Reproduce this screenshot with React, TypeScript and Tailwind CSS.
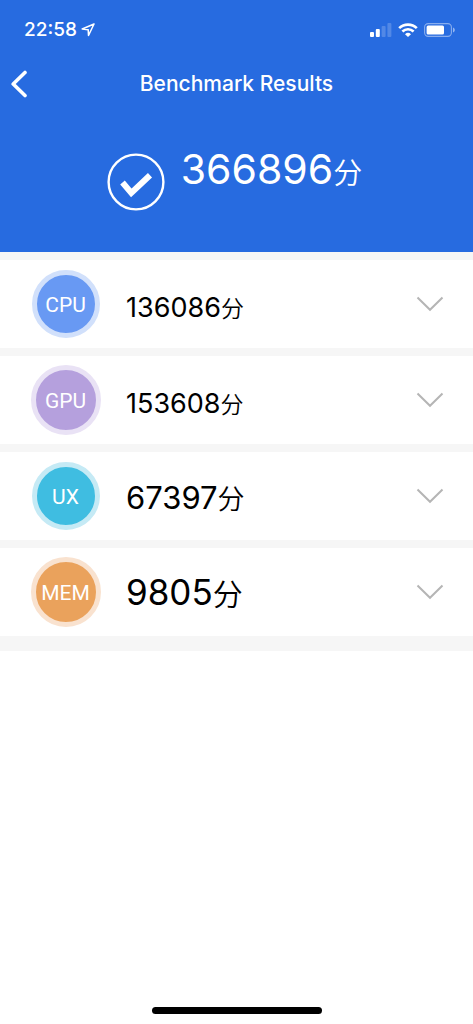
import clsx from "clsx";

interface Score {
    label: string;
    value: string;
    badge: string;
    text: string;
    unit: string;
}

const scores: Score[] = [
    { label: "CPU", value: "136086", badge: "size-[68px] bg-[#6899f3] border-[#d1e0fb]", text: "text-[27px] pt-[6px]", unit: "text-[23px]" },
    { label: "GPU", value: "153608", badge: "size-[70px] bg-[#b5a0dd] border-[#e9e2f5]", text: "text-[27px] pt-[6px]", unit: "text-[23px]" },
    { label: "UX", value: "67397", badge: "size-[68px] bg-[#3fbde1] border-[#c5eaf5]", text: "text-[31px] pt-1", unit: "text-[27px]" },
    { label: "MEM", value: "9805", badge: "size-[70px] bg-[#eaa25c] border-[#f9e2cf]", text: "text-[35px]", unit: "text-[30px]" },
];

const StatusBar = () => {
    return (
        <div className="flex items-center justify-between pt-4 pl-6 pr-[18px]">
            <div className="flex items-center gap-1">
                <span className="text-[19px] font-medium leading-7">22:58</span>
                <svg width="14" height="14" viewBox="0 0 14 14" fill="none" stroke="currentColor" strokeWidth="1.5" strokeLinejoin="round">
                    <path d="M13 1 1.2 6l6 .8.3 5.700z" />
                </svg>
            </div>
            <div className="flex items-center gap-[6px]">
                <svg width="22" height="14" viewBox="0 0 22 14" fill="currentColor">
                    <rect x="0" y="9" width="4" height="5" rx="1" />
                    <rect x="5.8" y="6" width="4" height="8" rx="1" />
                    <rect x="11.6" y="3" width="4" height="11" rx="1" opacity=".2" />
                    <rect x="17.4" y="0" width="4" height="14" rx="1" opacity=".2" />
                </svg>
                <svg width="20" height="14" viewBox="0 0 20 14" fill="none" stroke="currentColor" strokeWidth="2.6">
                    <path d="M1.2 5.2a12.5 12.5 0 0 1 17.6 0" />
                    <path d="M4.4 8.5a8 8 0 0 1 11.2 0" />
                    <path d="M7 11.2a4.4 4.4 0 0 1 6 0L10 14z" fill="currentColor" stroke="none" />
                </svg>
                <svg width="31" height="14" viewBox="0 0 31 14" fill="currentColor">
                    <rect x=".6" y=".6" width="26.8" height="12.8" rx="3.6" fill="none" stroke="currentColor" strokeWidth="1.1" opacity=".45" />
                    <rect x="2.6" y="2.4" width="17.4" height="9.2" rx="1.5" />
                    <path d="M29 4.6c1.2.4 1.8 1.4 1.8 2.4s-.6 2-1.8 2.4z" opacity=".5" />
                </svg>
            </div>
        </div>
    );
};

const ScoreRow = ({ label, value, badge, text, unit }: Score) => {
    return (
        <li>
            <button type="button" aria-expanded="false" className="flex h-[88px] w-full items-center bg-white pr-[29px] text-left">
                <span className="flex w-[126px] shrink-0 justify-center pl-[5px]">
                    <span className={clsx("flex items-center justify-center rounded-full border-[5px] pt-[3px] font-['Roboto',sans-serif] text-[21px] text-white", badge)}>
                        {label}
                    </span>
                </span>
                <span className={clsx("flex-1 leading-10", text)}>
                    {value}
                    <span className={clsx("font-['Noto_Sans_CJK_SC',sans-serif] font-[350]", unit)}>分</span>
                </span>
                <svg width="28" height="16" viewBox="0 0 28 16" fill="none" stroke="#b5b5b5" strokeWidth="2">
                    <path d="M1.5 1.5 14 13.8 26.5 1.5" />
                </svg>
            </button>
        </li>
    );
};

export default function App() {
    return (
        <div className="flex min-h-screen flex-col bg-white font-['Inter','Noto_Sans_CJK_SC',sans-serif] text-black">
            <header className="bg-[#276be0] pb-[41px] text-white">
                <StatusBar />
                <div className="grid grid-cols-[40px_1fr_40px] items-center pt-5">
                    <button type="button" aria-label="Back" className="flex h-10 items-center pl-[10px]">
                        <svg width="18" height="28" viewBox="0 0 18 28" fill="none" stroke="currentColor" strokeWidth="3.6" strokeLinecap="round" strokeLinejoin="round">
                            <path d="M15 2.5 3.2 14 15 25.5" />
                        </svg>
                    </button>
                    <h1 className="text-center text-[21px] font-medium">Benchmark Results</h1>
                </div>
                <div className="flex items-start justify-center pt-9 pr-1">
                    <svg className="mt-[13px]" width="58" height="58" viewBox="0 0 58 58" fill="none" stroke="currentColor">
                        <circle cx="29" cy="29" r="27.4" strokeWidth="2.4" />
                        <path d="m15.5 29.500 8.800 10.500L43 22.300" strokeWidth="6" />
                    </svg>
                    <p className="pl-4 text-[41px] leading-[58px]">
                        366896
                        <span className="font-['Noto_Sans_CJK_SC',sans-serif] text-[29px] font-[350]">分</span>
                    </p>
                </div>
            </header>
            <main className="flex-1">
                <ul className="flex flex-col gap-2 bg-[#f6f6f6] pt-2 pb-[15px]">
                    {scores.map((score) => (
                        <ScoreRow key={score.label} {...score} />
                    ))}
                </ul>
            </main>
            <footer className="flex justify-center pb-[10px]">
                <div className="h-[7px] w-[170px] rounded-full bg-black" />
            </footer>
        </div>
    );
}
